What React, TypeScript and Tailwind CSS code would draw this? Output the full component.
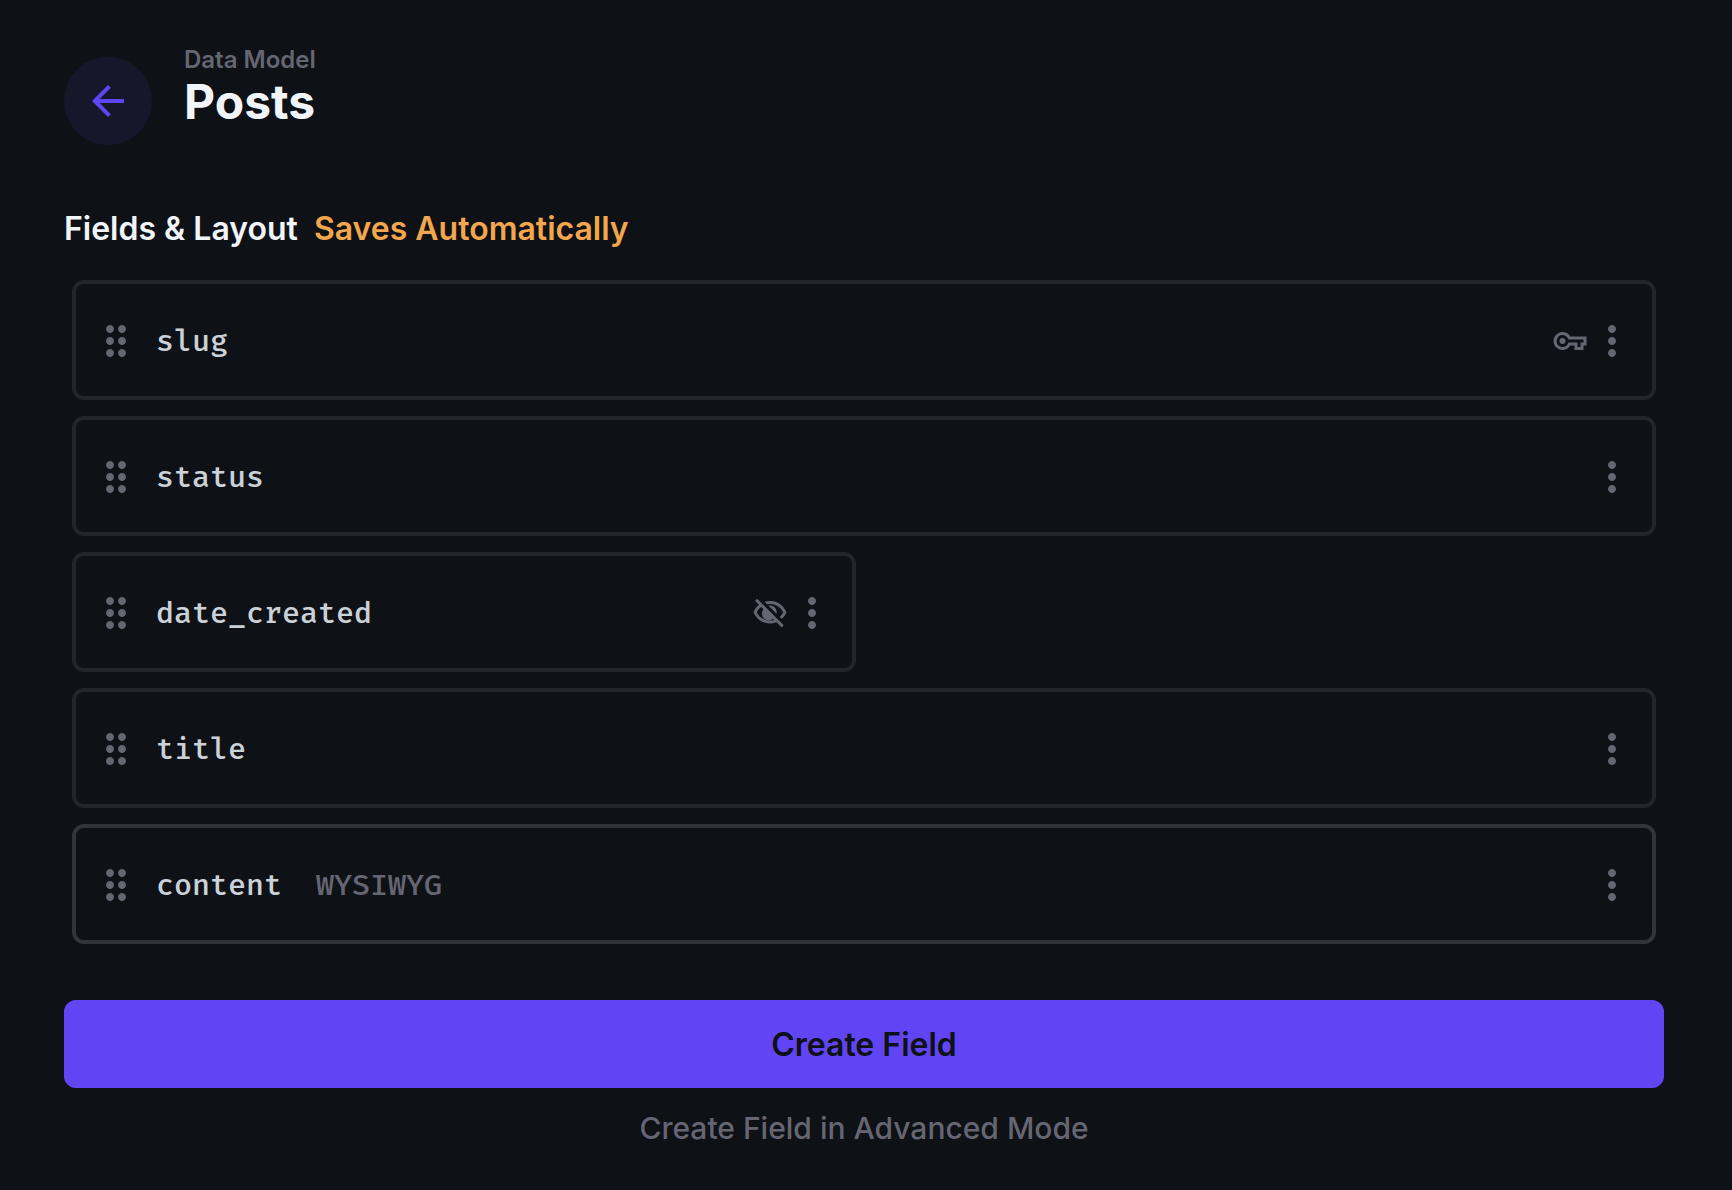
import type { ReactNode } from "react";
import { MdArrowBack, MdDragIndicator, MdMoreVert } from "react-icons/md";

type Field = {
  name: string;
  type?: string;
  half?: boolean;
  active?: boolean;
  status?: ReactNode;
};

function KeyIcon() {
  return (
    <svg viewBox="0 0 24 24" className="size-9" fill="none" stroke="currentColor" strokeWidth="2" role="img" aria-label="Primary key">
      <path d="M11.6 10H22v4h-2v3h-4v-3H11.6A5 5 0 1 1 11.6 10Z" />
      <circle cx="7" cy="12" r="2" fill="currentColor" stroke="none" />
    </svg>
  );
}

function HiddenIcon() {
  return (
    <svg viewBox="0 0 24 24" className="size-9" fill="currentColor" role="img" aria-label="Hidden">
      <path d="M12 6c3.79 0 7.17 2.13 8.82 5.5-.59 1.22-1.42 2.27-2.41 3.12l1.41 1.41c1.39-1.23 2.49-2.77 3.18-4.53C21.27 7.11 17 4 12 4c-1.27 0-2.49.2-3.64.57l1.65 1.65C10.66 6.09 11.32 6 12 6zm-1.07 1.14L13 9.21c.57.25 1.03.71 1.28 1.28l2.07 2.07c.08-.34.14-.7.14-1.07C16.5 9.01 14.48 7 12 7c-.37 0-.72.05-1.07.14zM2.01 3.87l2.68 2.68C3.06 7.83 1.77 9.53 1 11.5 2.73 15.89 7 19 12 19c1.52 0 2.98-.29 4.32-.82l3.42 3.42 1.41-1.41L3.42 2.45 2.01 3.87zM6.11 7.97l1.75 1.75c-.23.55-.36 1.15-.36 1.78 0 2.48 2.02 4.5 4.5 4.5.63 0 1.23-.13 1.77-.36l.98.98c-.88.24-1.8.38-2.75.38-3.79 0-7.17-2.13-8.82-5.5.7-1.43 1.72-2.61 2.93-3.53z" />
      <path d="M7.9 9.2a4.5 4.5 0 0 0 6.4 6.4z" />
    </svg>
  );
}

const fields: Field[] = [
  { name: "slug", status: <KeyIcon /> },
  { name: "status" },
  { name: "date_created", half: true, status: <HiddenIcon /> },
  { name: "title" },
  { name: "content", type: "WYSIWYG", active: true },
];

function FieldRow({ field }: { field: Field }) {
  return (
    <li
      className={`flex h-30 items-center rounded-xl border-4 px-4 pt-0.5 text-[#666672] ${
        field.half ? "col-span-1" : "col-span-2"
      } ${field.active ? "border-[#313539]" : "border-[#22252a]"}`}
    >
      <button type="button" aria-label={`Move ${field.name}`} className="cursor-move">
        <MdDragIndicator className="size-12" />
      </button>
      <div className="ml-4 flex flex-1 gap-[34px] font-['Fira_Mono','Fira_Code','Noto_Sans_Mono','DejaVu_Sans_Mono',monospace] text-[30px] leading-10 font-medium">
        <span className="text-[#cad1d9]">{field.name}</span>
        {field.type && <span>{field.type}</span>}
      </div>
      {field.status}
      <button type="button" aria-label={`Options for ${field.name}`}>
        <MdMoreVert className="size-12" />
      </button>
    </li>
  );
}

export default function App() {
  return (
    <main className="min-h-screen bg-[#0e1116] pt-11 pr-17 pb-10 pl-16 font-['Inter',sans-serif]">
      <header className="flex items-start gap-8">
        <button
          type="button"
          aria-label="Back"
          className="mt-[13px] flex size-22 items-center justify-center rounded-full bg-[#17172b] text-[#6145f4]"
        >
          <MdArrowBack className="size-12" />
        </button>
        <div>
          <a href="#data-model" className="block text-2xl leading-8 font-semibold text-[#666672]">
            Data Model
          </a>
          <h1 className="text-5xl leading-[52px] font-bold text-[#f1f5fa]">Posts</h1>
        </div>
      </header>

      <section className="mt-16">
        <h2 className="flex gap-4 text-[32px] leading-10 font-semibold text-[#f1f5fa]">
          Fields &amp; Layout
          <span className="text-[#f2a64d]">Saves Automatically</span>
        </h2>
        <ul className="mx-2 mt-[31px] grid grid-cols-2 gap-4">
          {fields.map((field) => (
            <FieldRow key={field.name} field={field} />
          ))}
        </ul>
        <button
          type="button"
          className="mt-14 h-22 w-full rounded-xl bg-[#6145f4] pt-0.5 text-[32px] leading-10 font-semibold text-[#0e1116]"
        >
          Create Field
        </button>
        <button type="button" className="mx-auto mt-5 block text-[30px] leading-10 font-medium text-[#666672]">
          Create Field in Advanced Mode
        </button>
      </section>
    </main>
  );
}
